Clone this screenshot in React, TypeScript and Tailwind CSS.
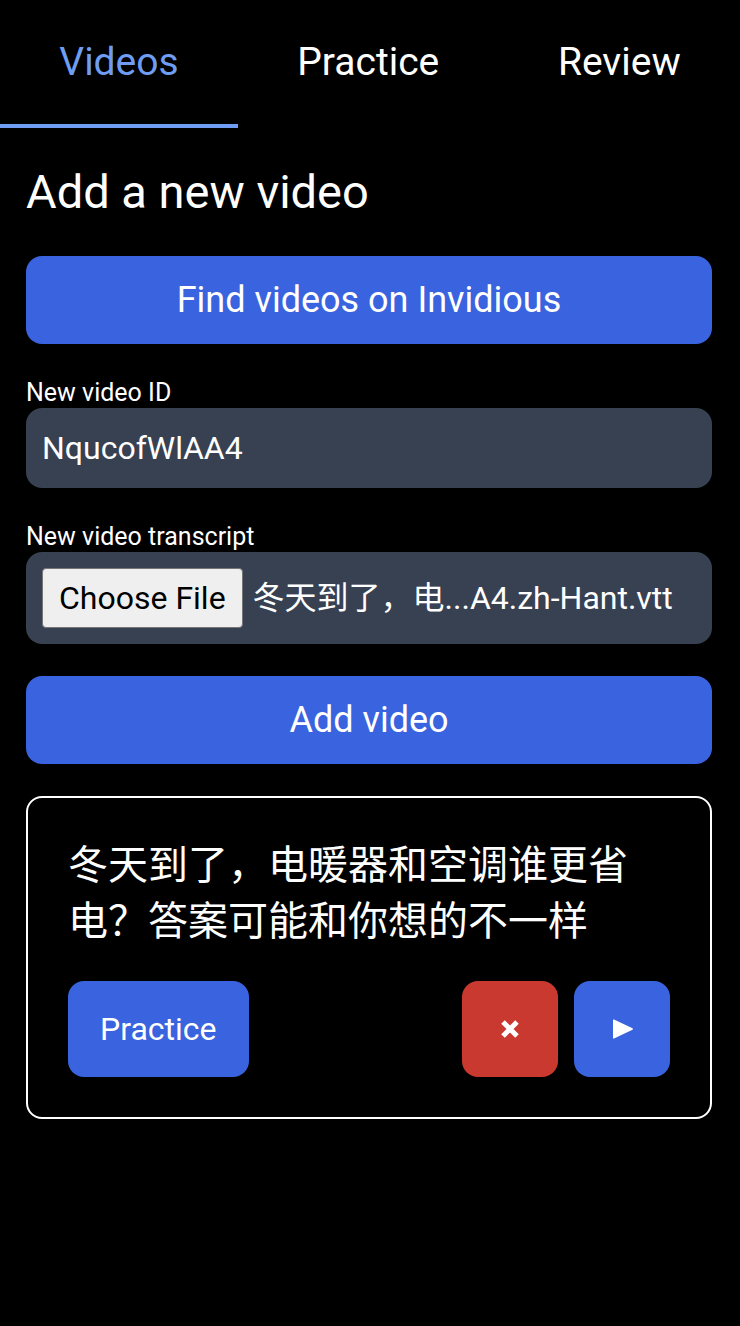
import React from "react";

const font = "font-['Roboto','Noto_Sans_CJK_SC',sans-serif]";

function Tab({ label, active }: { label: string; active?: boolean }) {
  return (
    <div
      className={`flex-auto h-[128px] flex items-center justify-center text-[39px] border-b-4 ${
        active ? "text-[#6f9df3] border-[#6f9df3]" : "text-white border-transparent"
      }`}
    >
      {label}
    </div>
  );
}

export default function App() {
  return (
    <div className={`min-h-[1326px] bg-black text-white ${font}`}>
      <nav className="flex">
        <Tab label="Videos" active />
        <Tab label="Practice" />
        <Tab label="Review" />
      </nav>
      <main className="pl-[26px] pr-[28px]">
        <h1 className="mt-[40px] text-[47px] leading-[48px]">Add a new video</h1>
        <button className="mt-[40px] w-full h-[88px] rounded-2xl bg-[#3a63e0] text-[36px] text-white">
          Find videos on Invidious
        </button>
        <label className="block mt-[34px] text-[25px] leading-[30px]">New video ID</label>
        <div className="h-[80px] rounded-2xl bg-[#374151] px-4 flex items-center text-[32px]">
          NqucofWlAA4
        </div>
        <label className="block mt-[34px] text-[25px] leading-[30px]">New video transcript</label>
        <div className="h-[92px] rounded-2xl bg-[#374151] px-4 flex items-center gap-[10px] text-[32px]">
          <div className="h-[60px] px-4 flex items-center bg-[#efefef] border border-[#767676] rounded-[4px] text-black">
            Choose File
          </div>
          <span className="whitespace-nowrap">冬天到了，电...A4.zh-Hant.vtt</span>
        </div>
        <button className="mt-[32px] w-full h-[88px] rounded-2xl bg-[#3a63e0] text-[36px] text-white">
          Add video
        </button>
        <div className="mt-[32px] border-2 border-white rounded-2xl p-[40px]">
          <p className="text-[40px] leading-[56px]">冬天到了，电暖器和空调谁更省电？答案可能和你想的不一样</p>
          <div className="mt-[31px] flex items-center gap-4">
            <button className="h-[96px] px-8 rounded-2xl bg-[#3a63e0] text-[32px] text-white">Practice</button>
            <div className="flex-1" />
            <button className="w-[96px] h-[96px] rounded-2xl bg-[#c9392f] flex items-center justify-center">
              <svg width="20" height="20" viewBox="0 0 20 20">
                <path d="M3 3 L17 17 M17 3 L3 17" stroke="white" strokeWidth="5" strokeLinecap="butt" />
              </svg>
            </button>
            <button className="w-[96px] h-[96px] rounded-2xl bg-[#3a63e0] flex items-center justify-center">
              <svg width="22" height="22" viewBox="0 0 22 22" className="ml-[2px]">
                <path d="M2 1.5 Q1 1 1 2.5 L1 19.5 Q1 21 2 20.5 L20.5 11.8 Q21.5 11 20.5 10.2 Z" fill="white" />
              </svg>
            </button>
          </div>
        </div>
      </main>
    </div>
  );
}
